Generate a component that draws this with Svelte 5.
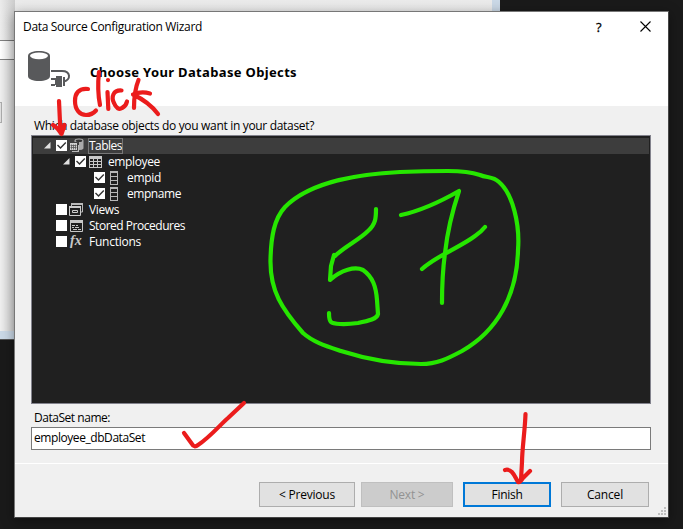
<script>
  const rows = [
    { label: 'Tables', width: 33, level: 0, icon: 'tables', open: true, checked: true, selected: true },
    { label: 'employee', width: 52, level: 1, icon: 'table', open: true, checked: true },
    { label: 'empid', width: 34, level: 2, icon: 'column', checked: true },
    { label: 'empname', width: 54, level: 2, icon: 'column', checked: true },
    { label: 'Views', width: 30, level: 0, icon: 'views' },
    { label: 'Stored Procedures', width: 96, level: 0, icon: 'procs' },
    { label: 'Functions', width: 52, level: 0, icon: 'fx' }
  ];

  // Adjusts tracking so a label occupies its intended width.
  function fit(node, width) {
    const natural = node.getBoundingClientRect().width;
    node.style.letterSpacing = `${(width - natural) / node.textContent.length}px`;
  }
</script>

<div class="desktop">
  <div class="back">
    <div class="field"></div>
    <div class="stub"></div>
    <div class="shade"></div>
  </div>

  <div class="dialog">
    <header>
      <div class="titlebar">
        <span class="title"><span class="t" use:fit={179}>Data Source Configuration Wizard</span></span>
        <span class="help">?</span>
        <svg class="close" width="11" height="11" viewBox="0 0 11 11"><path d="M.5 .5l10 10M10.5 .5l-10 10" stroke="#000" stroke-width="1.1" /></svg>
      </div>
      <div class="hero">
        <svg width="44" height="38" viewBox="0 0 44 38">
          <path d="M0 5C0 1.5 5 0 11 0s11 1.500 11 5v20c0 3.500-5 5-11 5S0 28.500 0 25z" fill="#58595b" />
          <ellipse cx="11" cy="4.800" rx="9" ry="3.400" fill="#fff" />
          <path d="M23 20h11c9 0 9 9 2 10.500" fill="none" stroke="#58595b" stroke-width="2" />
          <path d="M23 27h4v2h-4zM23 33h4v2h-4zM28 25h6v11h-6v-2h-1v-7h1zM35 26h2v9h-2z" fill="#58595b" />
        </svg>
        <h1><span class="t" use:fit={207}>Choose Your Database Objects</span></h1>
      </div>
    </header>

    <main>
      <div class="label question"><span class="t" use:fit={280}>Which database objects do you want in your dataset?</span></div>
      <div class="tree">
        {#each rows as row}
          <div class="row l{row.level}" class:selected={row.selected}>
            <span class="arrow">
              {#if row.open}<svg width="7" height="7"><path d="M6.500 0v6.500H0z" fill="#e0e0e0" /></svg>{/if}
            </span>
            <span class="check">
              {#if row.checked}<svg width="11" height="11"><path d="M1.500 5l3 3L9.800 2.500" fill="none" stroke="#333" stroke-width="1.400" /></svg>{/if}
            </span>
            <span class="icon">
              {#if row.icon === 'tables'}
                <svg width="16" height="16"><path d="M5.500 2.500q0-2 4.500-2t4.500 2v8q-1 1.500-4 1.500h-5z" fill="#aaa" /><ellipse cx="10" cy="2.800" rx="3.300" ry="1.300" fill="#333" /><path d="M0 4h10v10H0z" fill="#3d3d3d" /><path d="M3 7h7v7H3z" fill="#bbb" /><path d="M.5 4.500h8v8h-8z" fill="#d0d0d0" stroke="#3d3d3d" /><path d="M1.500 7.500h6M1.500 9.500h6M2.500 6.500v5M4.500 6.500v5M6.500 6.500v5" stroke="#555" stroke-width=".8" /></svg>
              {:else if row.icon === 'table'}
                <svg width="16" height="16"><path d="M1 2h13v12H1z" fill="#c8c8c8" /><path d="M2 5h3v2H2zM6 5h3v2H6zM10 5h3v2h-3zM2 8h3v2H2zM6 8h3v2H6zM10 8h3v2h-3zM2 11h3v2H2zM6 11h3v2H6zM10 11h3v2h-3z" fill="#202020" /></svg>
              {:else if row.icon === 'column'}
                <svg width="16" height="16"><path d="M3 1h8v14H3z" fill="#b8b8b8" /><path d="M4 3h6v3H4zM4 7h6v3H4zM4 11h6v3H4z" fill="#202020" /></svg>
              {:else if row.icon === 'views'}
                <svg width="16" height="16"><path d="M2.500 10V2h11v8H12" fill="none" stroke="#bbb" /><path d="M2 1h12v2H2z" fill="#bbb" /><path d="M.5 5.500h11v8H.5z" fill="#202020" stroke="#ccc" /><path d="M0 4h12v2H0z" fill="#ccc" /><path d="M3.500 8.500h5v2h-5z" fill="none" stroke="#ccc" /></svg>
              {:else if row.icon === 'procs'}
                <svg width="16" height="16"><path d="M1.500 2.500h12v11h-12z" fill="none" stroke="#c8c8c8" /><path d="M1 2h13v3H1z" fill="#c8c8c8" /><path d="M3 7.500h3M7 7.500h2M3 9.500h2M6 9.500h4M4 11.500h4M9 11.500h3" stroke="#c8c8c8" /></svg>
              {:else}
                <i class="fx">fx</i>
              {/if}
            </span>
            <span class="name"><span class="t" use:fit={row.width}>{row.label}</span></span>
          </div>
        {/each}
      </div>
      <div class="label dataset"><span class="t" use:fit={76}>DataSet name:</span></div>
      <div class="input"><span class="t" use:fit={111}>employee_dbDataSet</span></div>
    </main>

    <footer>
      <button class="prev"><span class="t" use:fit={56}>&lt; Previous</span></button>
      <button class="next" disabled><span class="t" use:fit={35}>Next &gt;</span></button>
      <button class="finish"><span class="t" use:fit={31}>Finish</span></button>
      <button class="cancel"><span class="t" use:fit={36}>Cancel</span></button>
      <svg class="grip" width="8" height="8"><path d="M6 0h2v2H6zM3 3h2v2H3zM6 3h2v2H6zM0 6h2v2H0zM3 6h2v2H3zM6 6h2v2H6z" fill="#bfbfbf" /></svg>
    </footer>
  </div>

  <svg class="ink" width="683" height="529" viewBox="0 0 683 529">
    <g stroke="#26e600" stroke-width="4.200">
      <path d="M400 172C363 174 312 180 285 207C274 219 271 237 270.500 260C270 291 282 309 303 333C313 342 326 346 341 351C366 359 395 364 421 364C437 364 447 359 462 351C497 331 517 296 518 250C520 225 513 194 499 182C493 176 487 178 480 175C471 172 461 171 448 171Q424 171 400 172" />
      <path d="M376 209C376 217 376 224 368 231C359 240 344 247 335 256L334 255L331 266L330 280C341 270 355 266 363 270C373 277 376 287 377 300L378 314C377 319 369 321 358 323C344 325 333 324 331 322C329 320 329 316 329 313" />
      <path d="M401 215C420 211 438 203 459 191C451 215 447 235 445 253Q442 275 442 303M422 269C436 256 459 248 475 236Q481 232 485 227" />
    </g>
    <g stroke="#eb1c1c" stroke-width="4.200">
      <path d="M59 101L60.500 133M53 125Q58 128 61.500 134L64.500 125M57 128L61 131" />
      <path d="M88 89C78 88 75 94 75 101C75 110 80 115 86 115Q92 115 96 110.500M99 72Q97 90 100 105M107.500 92L108.300 109M108 80L108 80.100M121.500 90.500C113 90 111 97 114 103C116 108 119 110 122 108Q126 106 127 101.500M138.500 80Q134 91 134 108M150 93.500Q141 91 133 94.500Q149 102 158 114" />
      <path d="M184 433L192 444Q194 448 198 445C209 438 221 424 228 418L244 403" />
      <path d="M525.500 414C525 430 522 450 522 462L521 480M505 470C512 468 515 477 518 482Q520 483 523 478L530 471" />
    </g>
  </svg>
</div>

<style>
  :global(body) { margin: 0; overflow: hidden; }
  * { box-sizing: border-box; }
  .desktop { position: relative; width: 683px; height: 529px; padding: 12px 0 0 14px; background: #1a1a1a; font: 12px/16px "Open Sans", "Noto Sans", sans-serif; color: #000; overflow: hidden; }
  .back { position: absolute; left: 0; top: 0; width: 500px; height: 339px; background: linear-gradient(#ebebeb, #efefef 50px); border-right: 8px solid #cbd9e7; border-bottom: 8px solid #cbd9e7; box-shadow: 0 1px #555; padding-top: 40px; overflow: hidden; }
  .field { height: 20px; border: solid #828282; border-width: 1px 0; background: #fff; }
  .stub { margin-top: 42px; width: 2px; height: 21px; border: 1px solid #adadad; border-left: 0; background: #e1e1e1; }
  .shade { position: absolute; left: 0; top: 0; width: 15px; height: 332px; background: linear-gradient(90deg, #0000, #0002); }
  .dialog { position: relative; display: flex; flex-direction: column; width: 655px; height: 507px; border: 1px solid #454545; border-top-color: #777; border-left-color: #777; background: #f0f0f0; box-shadow: 0 3px 12px #0006; margin-top: -1px; }
  header { height: 94px; background: #fff; }
  .titlebar { display: flex; align-items: center; height: 29px; padding: 0 17px 0 8px; }
  .title { flex: 1; }
  .t { white-space: pre; display: inline-block; }
  .help { width: 8px; margin-right: 36px; font-size: 13px; -webkit-text-stroke: .3px #000; }
  .hero { display: flex; padding: 10px 13px; }
  h1 { font: 700 13px/18px "Noto Sans", "Open Sans", sans-serif; margin: 12px 0 0 18px; }
  main { flex: 1; padding: 12px 17px 0 16px; border-bottom: 1px solid #fff; }
  .label { padding-left: 3px; height: 17px; }
  .tree { width: 620px; height: 269px; border: 1px solid #82828c; background: #202020; color: #fff; padding: 2px 1px; }
  .row { display: flex; align-items: center; height: 16px; padding-left: 11px; }
  .l1 { padding-left: 30px; }
  .l2 { padding-left: 49px; }
  .selected { background: #3d3d3d; }
  .arrow { width: 12px; height: 8px; display: flex; }
  .check { width: 11px; height: 11px; margin-right: 2px; background: #fff; display: flex; margin-top: -2px; }
  .icon { width: 16px; height: 16px; display: flex; margin-right: 3px; }
  .name { padding: 0 1px; height: 16px; line-height: 15px; }
  .selected .name { outline: 1px solid #777; outline-offset: -1px; }
  .fx { font: italic bold 14px/13px "Liberation Serif", serif; color: #c8c8c8; padding-left: 1px; }
  .dataset { margin-top: 6px; }
  .input { width: 620px; height: 23px; border: 1px solid #7a7a7a; background: #fff; padding: 2px; }
  footer { display: flex; justify-content: flex-end; position: relative; height: 53px; padding: 18px 19px 0 0; }
  button { font: inherit; color: #000; height: 25px; padding: 0; border: 1px solid #adadad; background: #e1e1e1; margin: 0; }
  .prev { width: 96px; margin-right: 6px; }
  .next { width: 92px; background: #ccc; border-color: #bfbfbf; color: #929292; margin-right: 10px; }
  .finish { width: 88px; border: 2px solid #0078d7; margin-right: 10px; }
  .cancel { width: 88px; }
  .grip { position: absolute; right: 2px; bottom: 2px; }
  .ink { position: absolute; left: 0; top: 0; fill: none; stroke-linecap: round; stroke-linejoin: round; pointer-events: none; }
</style>
